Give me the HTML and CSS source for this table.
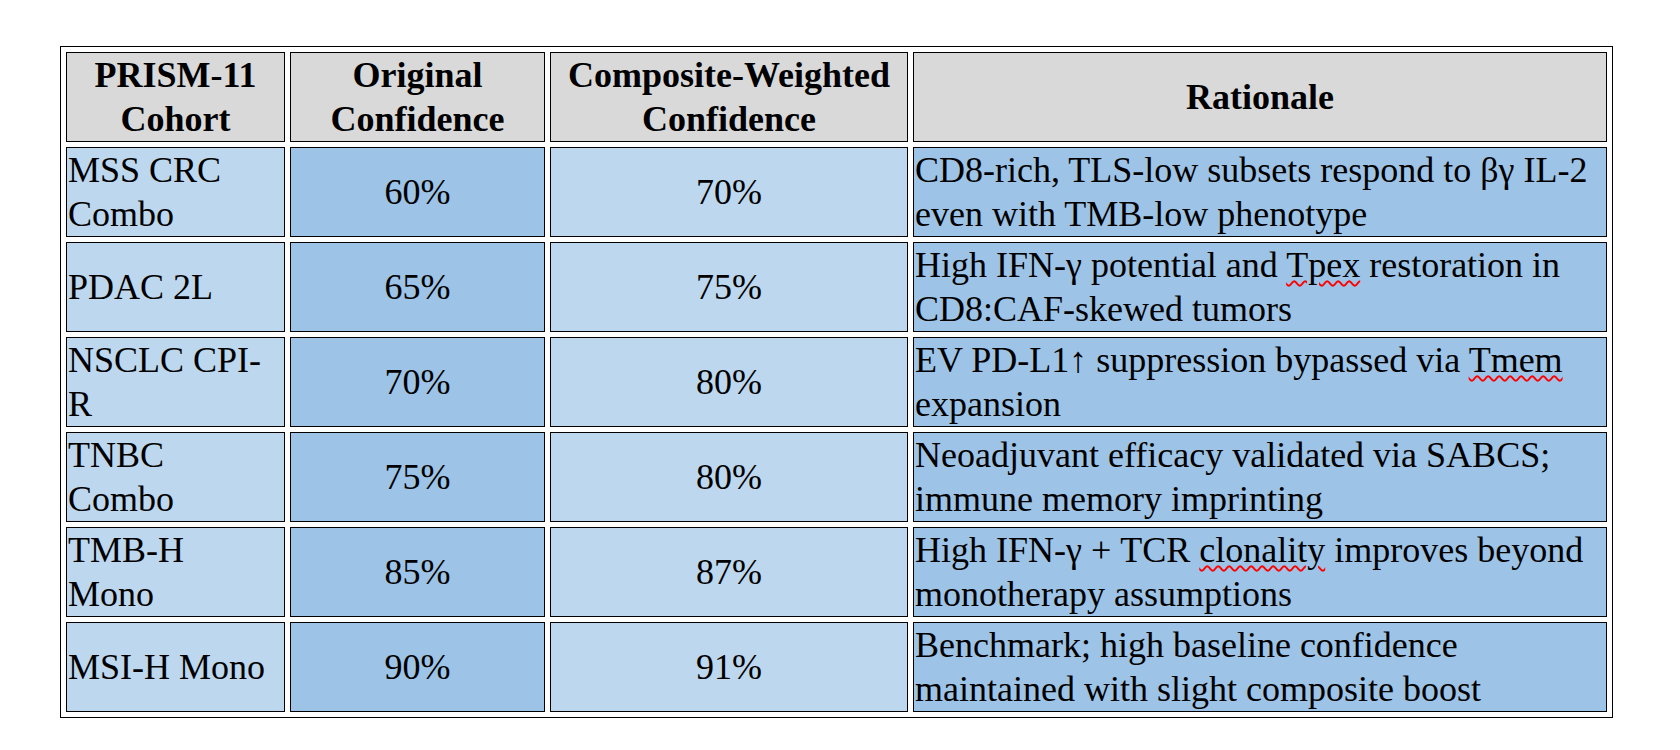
FILE: index.html
```html
<!DOCTYPE html>
<html>
<head>
<meta charset="utf-8">
<link rel="stylesheet" href="styles.css">
</head>
<body>
<div class="page">
<table class="grid">
  <colgroup>
    <col class="c1"><col class="c2"><col class="c3"><col class="c4">
  </colgroup>
  <thead>
    <tr>
      <th>PRISM-11<br>Cohort</th>
      <th>Original<br>Confidence</th>
      <th>Composite-Weighted<br>Confidence</th>
      <th>Rationale</th>
    </tr>
  </thead>
  <tbody>
    <tr>
      <td class="cohort">MSS CRC<br>Combo</td>
      <td class="orig">60%</td>
      <td class="comp">70%</td>
      <td class="why">CD8-rich, TLS-low subsets respond to βγ IL-2 even with TMB-low phenotype</td>
    </tr>
    <tr>
      <td class="cohort">PDAC 2L</td>
      <td class="orig">65%</td>
      <td class="comp">75%</td>
      <td class="why">High IFN-γ potential and <span class="spell">Tpex</span> restoration in CD8:CAF-skewed tumors</td>
    </tr>
    <tr>
      <td class="cohort">NSCLC CPI-R</td>
      <td class="orig">70%</td>
      <td class="comp">80%</td>
      <td class="why">EV PD-L1↑ suppression bypassed via <span class="spell">Tmem</span> expansion</td>
    </tr>
    <tr>
      <td class="cohort">TNBC<br>Combo</td>
      <td class="orig">75%</td>
      <td class="comp">80%</td>
      <td class="why">Neoadjuvant efficacy validated via SABCS; immune memory imprinting</td>
    </tr>
    <tr>
      <td class="cohort">TMB-H<br>Mono</td>
      <td class="orig">85%</td>
      <td class="comp">87%</td>
      <td class="why">High IFN-γ + TCR <span class="spell">clonality</span> improves beyond monotherapy assumptions</td>
    </tr>
    <tr>
      <td class="cohort">MSI-H Mono</td>
      <td class="orig">90%</td>
      <td class="comp">91%</td>
      <td class="why">Benchmark; high baseline confidence maintained with slight composite boost</td>
    </tr>
  </tbody>
</table>
</div>
</body>
</html>
```

FILE: styles.css
```css
html, body {
  margin: 0;
  padding: 0;
  background: #ffffff;
}

.page {
  padding: 46px 0 0 60px;
}

.grid {
  border: 1px solid #000;
  border-collapse: separate;
  border-spacing: 5px;
  table-layout: fixed;
  width: 1553px;
  font-family: "Liberation Serif", "Times New Roman", serif;
  font-size: 36px;
  line-height: 44px;
  color: #000;
}

.c1 { width: 219px; }
.c2 { width: 255px; }
.c3 { width: 358px; }
.c4 { width: 694px; }

.grid th,
.grid td {
  border: 1px solid #000;
  padding: 0 1px;
  vertical-align: middle;
  height: 90px;
  box-sizing: border-box;
}

.grid th {
  background: #d9d9d9;
  font-weight: bold;
  text-align: center;
}

.grid td.cohort { background: #bdd7ee; text-align: left; }
.grid td.orig { background: #9dc3e6; text-align: center; }
.grid td.comp { background: #bdd7ee; text-align: center; }
.grid td.why { background: #9dc3e6; text-align: left; }

.spell {
  text-decoration: underline wavy #ff0000;
  text-decoration-thickness: 1.5px;
  text-underline-offset: 3px;
}
```
